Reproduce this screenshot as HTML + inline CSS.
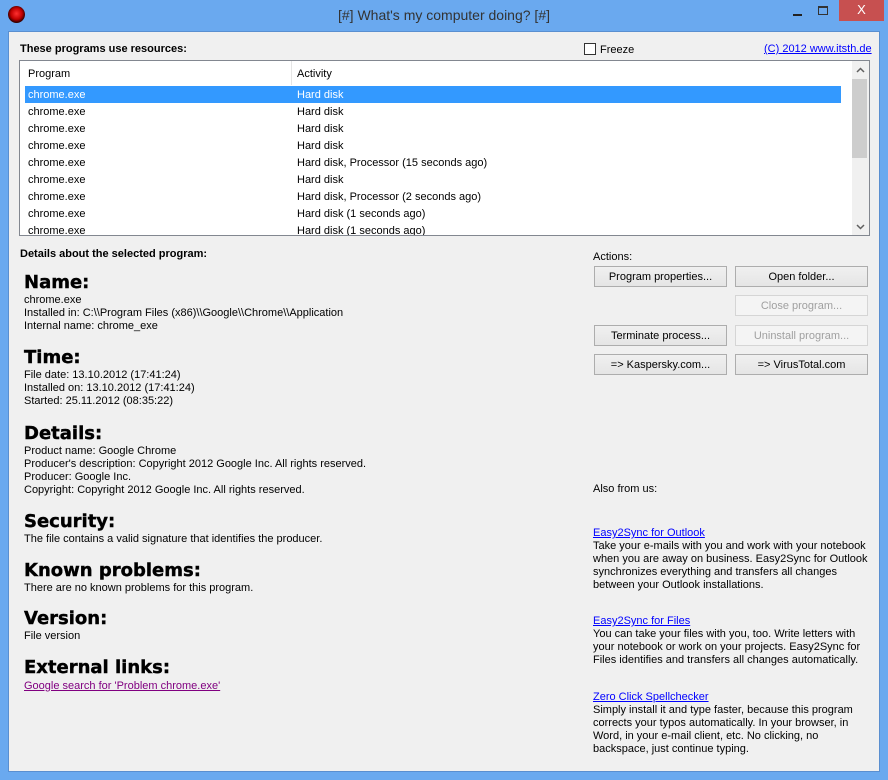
<!DOCTYPE html>
<html><head><meta charset="utf-8"><style>
*{margin:0;padding:0;box-sizing:border-box}
body{width:888px;height:780px;background:#6aa9ef;font-family:"Liberation Sans",Arial,sans-serif;font-size:11px;color:#000;position:relative;overflow:hidden}
.a{position:absolute;white-space:nowrap}
#client{position:absolute;left:8px;top:31px;width:872px;height:741px;background:#f0f0f0;border:1px solid #5a8fd0}
.t{line-height:13px}
h2{position:absolute;font-family:"DejaVu Sans",Verdana,sans-serif;font-weight:bold;font-size:18px;left:24px;white-space:nowrap;line-height:20px;-webkit-text-stroke:0.4px #000}
.btn{position:absolute;width:133px;height:21px;border:1px solid #adadad;background:linear-gradient(#f0f0f0,#e5e5e5);text-align:center;line-height:20px;font-size:11px}
.dis{color:#a0a0a0;border-color:#d5d5d5;background:#f4f4f4}
a{color:#0000ff;text-decoration:underline}
.row{position:absolute;left:25px;width:816px;height:17px;line-height:17px}
.row span{position:absolute;top:1px}
</style></head><body>
<div class="a" style="left:8px;top:6px;width:17px;height:17px;border-radius:50%;background:radial-gradient(circle at 50% 45%,#ff3030 0,#c00000 45%,#300 70%,#222 100%)"></div>
<div class="a" style="left:0;width:888px;top:7px;text-align:center;font-size:14px;color:#333">[#] What's my computer doing? [#]</div>
<div class="a" style="left:793px;top:14px;width:9px;height:2px;background:#222"></div>
<div class="a" style="left:818px;top:6px;width:10px;height:9px;border:1px solid #333;border-top-width:2px"></div>
<div class="a" style="left:839px;top:0;width:45px;height:21px;background:#c75050;color:#fff;text-align:center;font-size:13px;line-height:20px">X</div>
<div id="client"></div>
<div class="a" style="left:20px;top:43px;font-weight:bold">These programs use resources:</div>
<div class="a" style="left:584px;top:43px;width:12px;height:12px;border:1px solid #333;background:#fff"></div>
<div class="a" style="left:600px;top:44px">Freeze</div>
<div class="a" style="left:764px;top:43px"><a>(C) 2012 www.itsth.de</a></div>
<div class="a" style="left:19px;top:60px;width:851px;height:176px;background:#fff;border:1px solid #828790;overflow:hidden">
 <div class="a" style="left:271px;top:0;width:1px;height:24px;background:#e5e5e5"></div>
 <div class="a" style="left:8px;top:7px">Program</div>
 <div class="a" style="left:277px;top:7px">Activity</div>
 <div class="a" style="left:832px;top:0;width:17px;height:175px;background:#f0f0f0"></div>
 <div class="a" style="left:832px;top:18px;width:15px;height:79px;background:#cdcdcd"></div>
 <svg class="a" style="left:836px;top:6px" width="9" height="6"><path d="M1 5L4.5 1.5L8 5" stroke="#606060" stroke-width="1.5" fill="none"/></svg>
 <svg class="a" style="left:836px;top:163px" width="9" height="6"><path d="M1 1L4.5 4.5L8 1" stroke="#606060" stroke-width="1.5" fill="none"/></svg>
</div>
<div style="position:absolute;left:0;top:0;width:888px;height:235px;overflow:hidden">
<div class="row" style="top:86px;background:#3399ff;color:#fff"><span style="left:3px">chrome.exe</span><span style="left:272px">Hard disk</span></div>
<div class="row" style="top:103px"><span style="left:3px">chrome.exe</span><span style="left:272px">Hard disk</span></div>
<div class="row" style="top:120px"><span style="left:3px">chrome.exe</span><span style="left:272px">Hard disk</span></div>
<div class="row" style="top:137px"><span style="left:3px">chrome.exe</span><span style="left:272px">Hard disk</span></div>
<div class="row" style="top:154px"><span style="left:3px">chrome.exe</span><span style="left:272px">Hard disk, Processor (15 seconds ago)</span></div>
<div class="row" style="top:171px"><span style="left:3px">chrome.exe</span><span style="left:272px">Hard disk</span></div>
<div class="row" style="top:188px"><span style="left:3px">chrome.exe</span><span style="left:272px">Hard disk, Processor (2 seconds ago)</span></div>
<div class="row" style="top:205px"><span style="left:3px">chrome.exe</span><span style="left:272px">Hard disk (1 seconds ago)</span></div>
<div class="row" style="top:222px"><span style="left:3px">chrome.exe</span><span style="left:272px">Hard disk (1 seconds ago)</span></div>
</div>
<div class="a" style="left:20px;top:248px;font-weight:bold">Details about the selected program:</div>
<h2 style="top:273px">Name:</h2>
<div class="a t" style="left:24px;top:294px">chrome.exe<br>Installed in: C:\\Program Files (x86)\\Google\\Chrome\\Application<br>Internal name: chrome_exe</div>
<h2 style="top:348px">Time:</h2>
<div class="a t" style="left:24px;top:369px">File date: 13.10.2012 (17:41:24)<br>Installed on: 13.10.2012 (17:41:24)<br>Started: 25.11.2012 (08:35:22)</div>
<h2 style="top:424px">Details:</h2>
<div class="a t" style="left:24px;top:445px">Product name: Google Chrome<br>Producer's description: Copyright 2012 Google Inc. All rights reserved.<br>Producer: Google Inc.<br>Copyright: Copyright 2012 Google Inc. All rights reserved.</div>
<h2 style="top:512px">Security:</h2>
<div class="a t" style="left:24px;top:533px">The file contains a valid signature that identifies the producer.</div>
<h2 style="top:561px">Known problems:</h2>
<div class="a t" style="left:24px;top:582px">There are no known problems for this program.</div>
<h2 style="top:609px">Version:</h2>
<div class="a t" style="left:24px;top:630px">File version</div>
<h2 style="top:658px">External links:</h2>
<div class="a t" style="left:24px;top:680px"><a style="color:#800080">Google search for 'Problem chrome.exe'</a></div>
<div class="a" style="left:593px;top:251px">Actions:</div>
<div class="btn" style="left:594px;top:266px">Program properties...</div>
<div class="btn" style="left:735px;top:266px">Open folder...</div>
<div class="btn dis" style="left:735px;top:295px">Close program...</div>
<div class="btn" style="left:594px;top:325px">Terminate process...</div>
<div class="btn dis" style="left:735px;top:325px">Uninstall program...</div>
<div class="btn" style="left:594px;top:354px">=&gt; Kaspersky.com...</div>
<div class="btn" style="left:735px;top:354px">=&gt; VirusTotal.com</div>
<div class="a" style="left:593px;top:483px">Also from us:</div>
<div class="a t" style="left:593px;top:527px"><a>Easy2Sync for Outlook</a><br>Take your e-mails with you and work with your notebook<br>when you are away on business. Easy2Sync for Outlook<br>synchronizes everything and transfers all changes<br>between your Outlook installations.</div>
<div class="a t" style="left:593px;top:615px"><a>Easy2Sync for Files</a><br>You can take your files with you, too. Write letters with<br>your notebook or work on your projects. Easy2Sync for<br>Files identifies and transfers all changes automatically.</div>
<div class="a t" style="left:593px;top:691px"><a>Zero Click Spellchecker</a><br>Simply install it and type faster, because this program<br>corrects your typos automatically. In your browser, in<br>Word, in your e-mail client, etc. No clicking, no<br>backspace, just continue typing.</div>
</body></html>
